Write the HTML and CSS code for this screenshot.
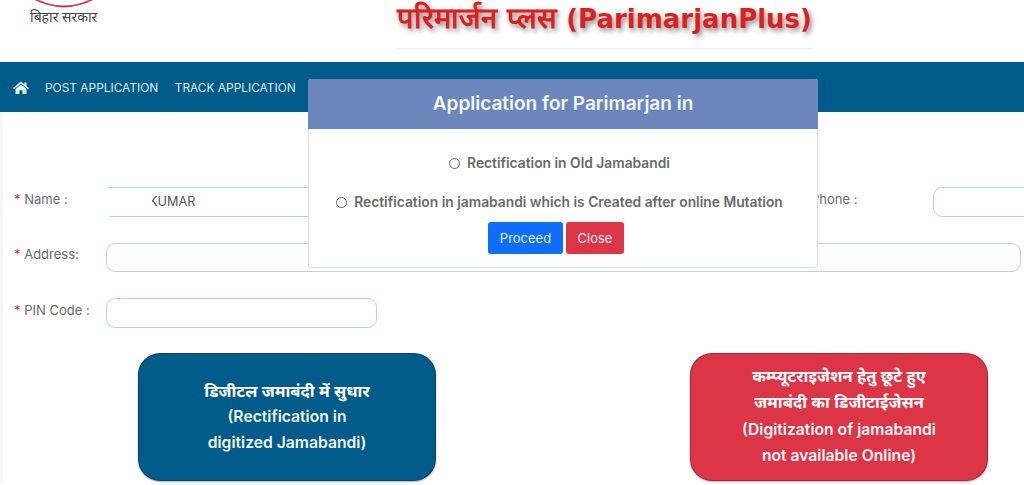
FILE: index.html
```html
<!DOCTYPE html>
<html lang="hi">
<head>
<meta charset="utf-8">
<title>ParimarjanPlus</title>
<link rel="stylesheet" href="styles.css">
</head>
<body>
<header class="site-header">
  <div class="logo">
    <svg class="logo-arc" width="68" height="8" viewBox="0 0 68 8"><path d="M-1 -5C9 3 24 6.500 34 6.500C44 6.500 59 3 69 -5" fill="none" stroke="#c83c48" stroke-width="1.800"/></svg>
    <div class="logo-text">बिहार सरकार</div>
  </div>
  <h1 class="title"><span class="title-hi">परिमार्जन प्लस</span> (ParimarjanPlus)</h1>
</header>
<nav class="nav">
  <svg class="home" width="16" height="13" viewBox="0 0 16 13"><path d="M8 0.500 11.500 3.400V1.500H13.500V5L16 7.100 15 8.200 8 2.400 1 8.200 0 7.100ZM8 3.600 13.500 8.100V13H9.500V9.300H6.500V13H2.500V8.100Z" fill="#e6f4fb"/></svg>
  <a class="nav-link">POST APPLICATION</a>
  <a class="nav-link">TRACK APPLICATION</a>
</nav>
<main class="content">
  <div class="row">
    <label class="label"><b>*</b> Name :</label>
    <div class="field field-name"><span class="name-text">KUMAR</span></div>
    <label class="label label-phone">Phone :</label>
    <div class="field field-phone"></div>
  </div>
  <div class="row row-address">
    <label class="label label-address"><b>*</b> Address:</label>
    <div class="field field-address"></div>
  </div>
  <div class="row row-pin">
    <label class="label"><b>*</b> PIN Code :</label>
    <div class="field field-pin"></div>
  </div>
  <div class="cards">
    <a class="card card-blue">
      <span class="card-hi">डिजीटल जमाबंदी में सुधार</span>
      <span class="card-en">(Rectification in</span>
      <span class="card-en">digitized Jamabandi)</span>
    </a>
    <a class="card card-red">
      <span class="card-hi">कम्प्यूटराइजेशन हेतु छूटे हुए</span>
      <span class="card-hi">जमाबंदी का डिजीटाईजेसन</span>
      <span class="card-en">(Digitization of jamabandi</span>
      <span class="card-en">not available Online)</span>
    </a>
  </div>
</main>
<section class="modal">
  <div class="modal-head">Application for Parimarjan in</div>
  <div class="modal-body">
    <div class="option option-first"><span class="radio"></span>Rectification in Old Jamabandi</div>
    <div class="option option-second"><span class="radio"></span>Rectification in jamabandi which is Created after online Mutation</div>
    <div class="actions">
      <button class="btn btn-blue">Proceed</button>
      <button class="btn btn-red">Close</button>
    </div>
  </div>
</section>
</body>
</html>
```
FILE: styles.css
```css
* { box-sizing: border-box; }
html, body { margin: 0; height: 485px; overflow: hidden; background: #fff; }
body { font-family: "Inter", "Noto Sans", "Liberation Sans", sans-serif; position: relative; color: #666; }

.site-header { height: 62px; display: flex; padding-left: 30px; }
.logo { width: 68px; }
.logo-arc { display: block; }
.logo-text { font-family: "Noto Sans", "Liberation Sans", sans-serif; font-size: 14px; line-height: 17px; color: #444; white-space: nowrap; }
.title { margin: 0 0 0 299px; width: 415px; height: 49px; border-bottom: 1px solid #eceef0; font-family: "DejaVu Sans", sans-serif; font-weight: 700; font-size: 26px; line-height: 39px; color: #dc1f1f; text-shadow: 2px 3px 5px rgba(0,0,0,.45); white-space: nowrap; }
.title-hi { font-size: 29.100px; line-height: 30px; }

.nav { height: 50px; background: #015b8a; display: flex; align-items: center; padding: 0 0 0 13px; }
.home { margin-right: 16px; }
.nav-link { color: #d6eef9; font-size: 11.900px; margin-right: 16.500px; white-space: nowrap; }

.content { padding: 75px 0 0 14px; border-left: 3px solid #f6f6f6; }
.row { display: flex; height: 30px; margin-bottom: 26px; align-items: flex-start; }
.row-address { height: 29px; }
.row-pin { margin-bottom: 25px; }
.label { width: 92px; font-size: 13px; line-height: 25px; color: #6b6b6b; white-space: nowrap; flex: none; margin-left: -3px; }
.label-address { line-height: 23px; }
.label b { color: #c4304a; font-weight: 400; }
.field { height: 30px; border: 1px solid #b5d6da; border-radius: 9px; flex: none; background: #fff; }
.field-name { width: 500px; border-left: 0; margin-left: 3px; border-radius: 0; padding-left: 40px; font-size: 12.700px; line-height: 28px; color: #555; }
.name-text { position: relative; }
.name-text::before { content: ""; position: absolute; left: -4px; top: -4px; width: 7px; height: 24px; background: #fff; }
.label-phone { width: auto; margin-left: 202px; margin-right: 76px; }
.field-phone { width: 120px; }
.field-address { width: 915px; height: 29px; }
.field-pin { width: 271px; }

.cards { display: flex; gap: 254px; margin: 0 0 0 121px; }
.card { width: 298px; height: 128px; border-radius: 22px; color: #fff; display: flex; flex-direction: column; align-items: center; justify-content: center; border: 1px solid rgba(0,0,0,.25); box-shadow: 0 1px 2px rgba(0,0,0,.3); }
.card-blue { background: #015b8a; }
.card-red { background: #dc3545; padding-bottom: 2px; }
.card-hi { font-family: "Noto Sans", "Liberation Sans", sans-serif; font-weight: 700; font-size: 16.500px; line-height: 26px; white-space: nowrap; }
.card-red .card-hi + .card-hi { margin-bottom: 2px; }
.card-en { font-weight: 600; font-size: 15.700px; line-height: 26px; color: #f0f6fa; white-space: nowrap; }

.modal { position: absolute; left: 308px; top: 79px; width: 510px; height: 189px; background: #fff; border: 1px solid #d8dfe3; border-radius: 3px; }
.modal-head { height: 50px; margin: -1px -1px 0; background: #6b86bb; color: #f4f7fc; font-weight: 600; font-size: 19px; line-height: 49px; text-align: center; border-radius: 3px 3px 0 0; }
.modal-body { display: flex; flex-direction: column; align-items: center; }
.option { font-weight: 600; font-size: 13.800px; color: #6a6a6a; display: flex; align-items: center; white-space: nowrap; margin-right: 7px; }
.option-first { margin-top: 26px; height: 16px; }
.option-second { margin-top: 23px; height: 16px; }
.radio { width: 11px; height: 11px; border: 1.300px solid #666; border-radius: 50%; margin-right: 7px; flex: none; }
.actions { display: flex; gap: 3px; margin: 12px 14px 0 0; }
.btn { height: 32px; border: 0; border-radius: 3px; font-family: inherit; font-size: 13px; color: #e6f1ff; padding: 0; }
.btn-blue { width: 75px; background: #0d6efd; }
.btn-red { width: 58px; background: #dc3545; }
```
